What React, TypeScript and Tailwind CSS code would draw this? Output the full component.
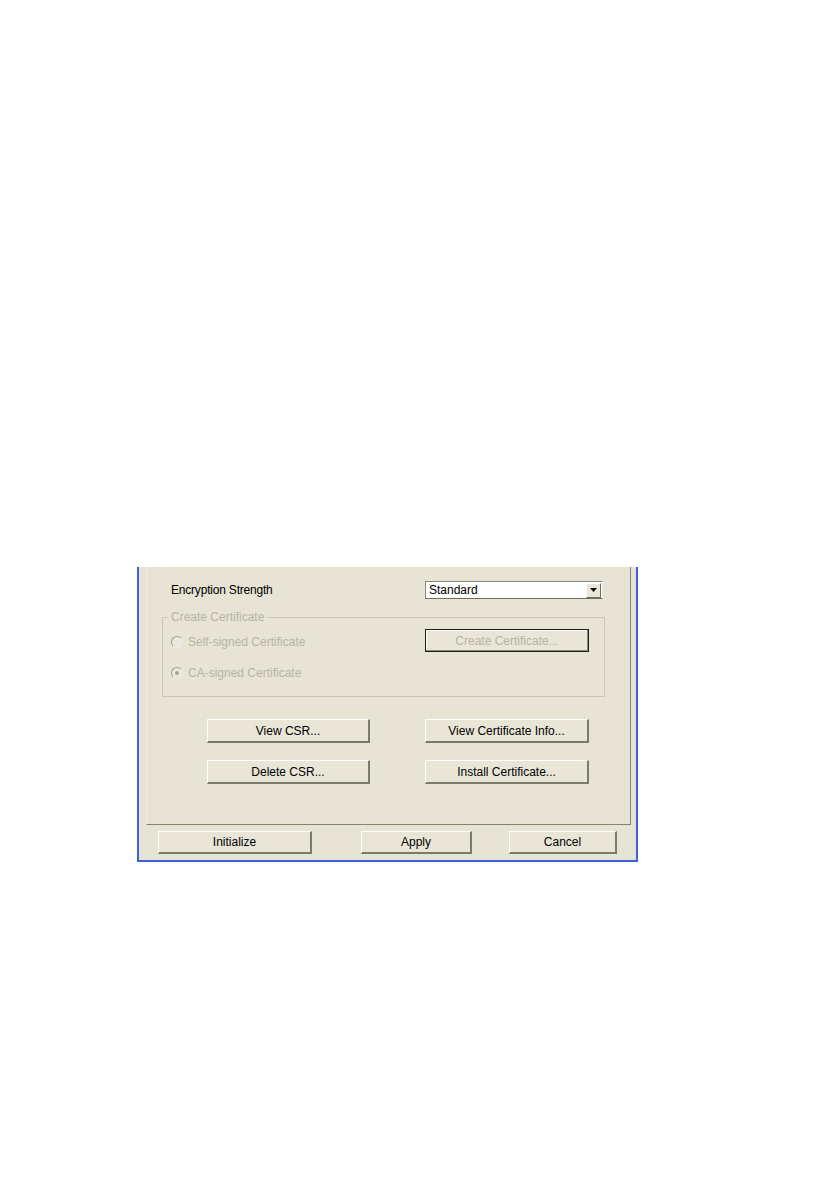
import React from 'react';

const font = { fontFamily: '"Liberation Sans", Arial, sans-serif' };

function Btn({ label, w, h = 'h-[24px]' }: { label: string; w: string; h?: string }) {
  return (
    <button
      className={`${w} ${h} flex items-center justify-center border-t border-l border-white border-r-2 border-b-2 border-r-[#7c7a6c] border-b-[#7c7a6c] bg-[#e9e6d7] text-[12px] text-black`}
    >
      {label}
    </button>
  );
}

function Radio({ checked }: { checked?: boolean }) {
  return (
    <span className="w-[12px] h-[12px] rounded-full border border-t-[#9f9c8e] border-l-[#9f9c8e] border-r-[#ecebe3] border-b-[#ecebe3] bg-[#ebe9dd] flex items-center justify-center shrink-0">
      {checked && <span className="w-[4px] h-[4px] rounded-full bg-[#a9a698]" />}
    </span>
  );
}

export default function App() {
  return (
    <div className="w-[840px] h-[1192px] bg-white pt-[567px] pl-[137px]" style={font}>
      <div className="w-[501px] h-[295px] border-x-2 border-b-2 border-[#3a62d0] bg-[#e7e4d5] flex flex-col">
        {/* tab page */}
        <div className="ml-[7px] mr-[5px] h-[258px] border-l border-[#efede2] border-r border-b border-r-[#858374] border-b-[#858374] flex flex-col">
          <div className="mt-[14px] pl-[24px] pr-[27px] flex items-center justify-between">
            <span className="text-[12px] tracking-[-0.2px] text-black">Encryption Strength</span>
            <div className="w-[178px] h-[18px] bg-white border border-t-[#8a887a] border-l-[#8a887a] border-r-[#ecebe4] border-b-[#6e6c60] flex items-center">
              <span className="flex-1 pl-[3px] text-[12px] leading-none text-black">Standard</span>
              <span className="w-[15px] h-[15px] mr-[1px] bg-[#e9e6d7] border-t border-l border-white border-r border-b border-r-[#6f6d61] border-b-[#6f6d61] flex items-center justify-center">
                <svg width="7" height="4" viewBox="0 0 7 4">
                  <path d="M0 0h7L3.5 4z" fill="#000" />
                </svg>
              </span>
            </div>
          </div>

          <fieldset className="mt-[11px] ml-[15px] mr-[25px] border border-[#cbc8b8] pt-[5px] pb-[15px]">
            <legend className="ml-[5px] px-[3px] text-[12px] leading-[14px] text-[#b7b4a5]">Create Certificate</legend>
            <div className="pl-[8px] pr-[15px] flex items-center justify-between">
              <div className="flex items-center gap-[5px] pt-[3px]">
                <Radio />
                <span className="text-[12px] text-[#b7b4a5]">Self-signed Certificate</span>
              </div>
              <button className="w-[164px] h-[23px] flex items-center justify-center border border-[#1e1e1a] shadow-[inset_-1px_-1px_0_#8a887a,inset_1px_1px_0_#ffffff] bg-[#e9e6d7] text-[12px] text-[#b7b4a5]">
                Create Certificate...
              </button>
            </div>
            <div className="mt-[13px] h-[16px] pl-[8px] flex items-center gap-[5px]">
              <Radio checked />
              <span className="text-[12px] text-[#b7b4a5]">CA-signed Certificate</span>
            </div>
          </fieldset>

          <div className="mt-[22px] pl-[60px] flex flex-col gap-[17px]">
            <div className="flex gap-[55px]">
              <Btn label="View CSR..." w="w-[163px]" />
              <Btn label="View Certificate Info..." w="w-[164px]" />
            </div>
            <div className="flex gap-[55px]">
              <Btn label="Delete CSR..." w="w-[163px]" />
              <Btn label="Install Certificate..." w="w-[164px]" />
            </div>
          </div>
        </div>

        <div className="mt-[6px] ml-[19px] flex">
          <Btn label="Initialize" w="w-[154px]" h="h-[23px]" />
          <div className="ml-[49px]">
            <Btn label="Apply" w="w-[111px]" h="h-[23px]" />
          </div>
          <div className="ml-[37px]">
            <Btn label="Cancel" w="w-[108px]" h="h-[23px]" />
          </div>
        </div>
      </div>
    </div>
  );
}
